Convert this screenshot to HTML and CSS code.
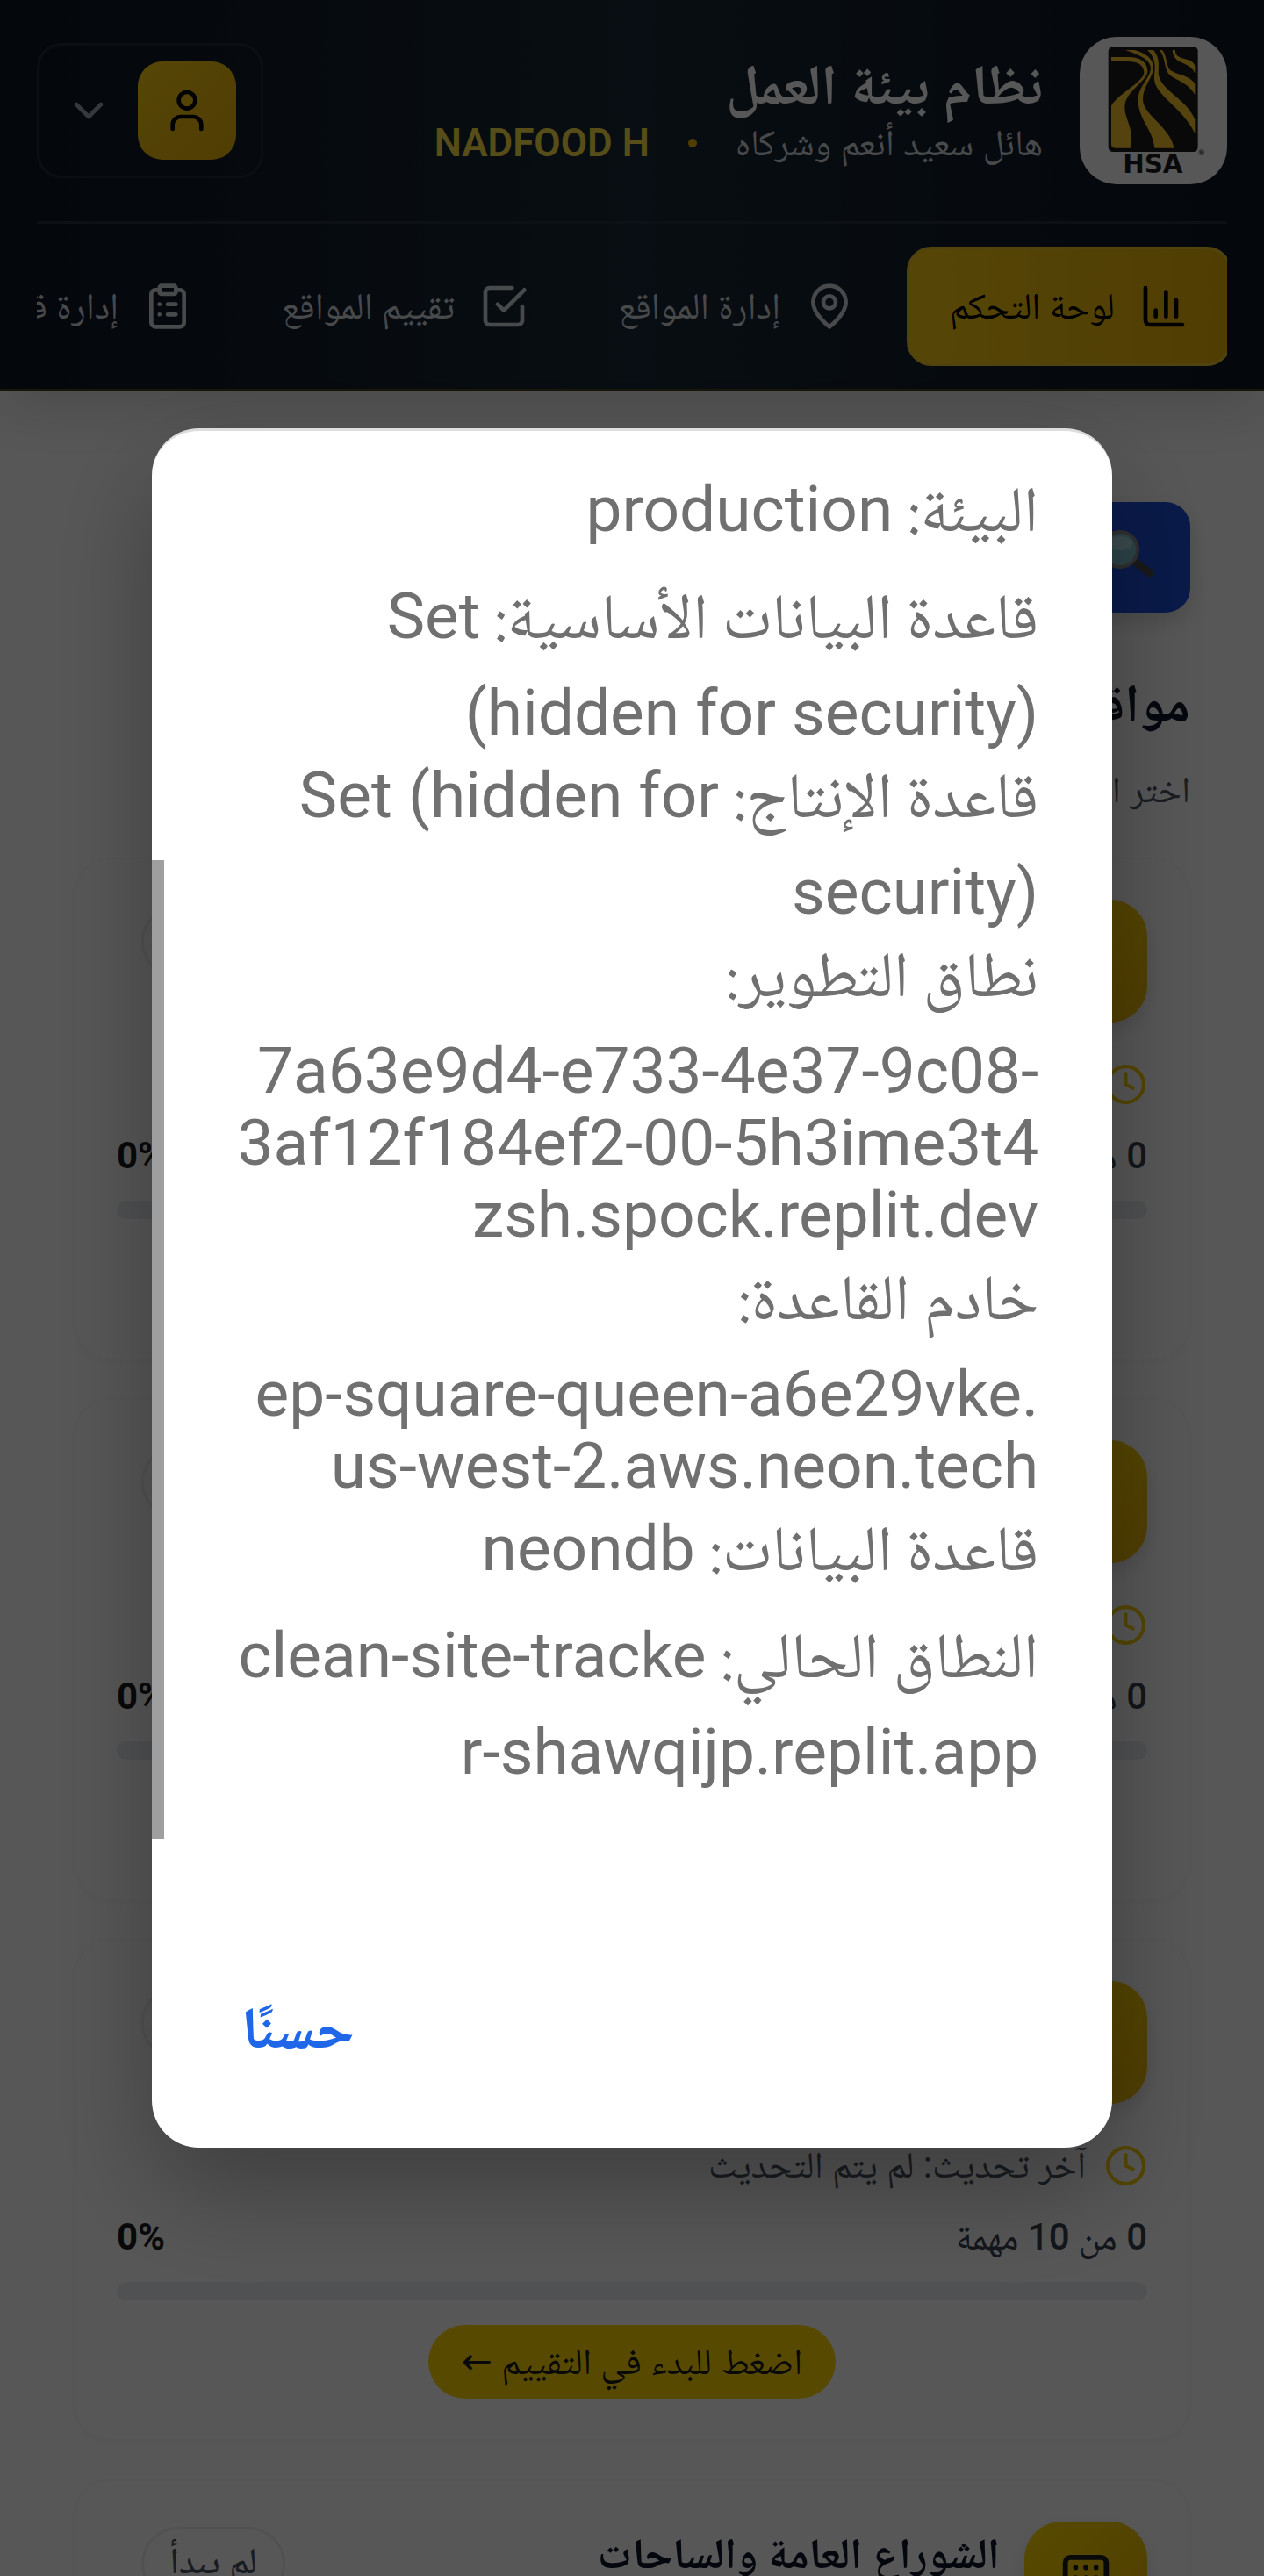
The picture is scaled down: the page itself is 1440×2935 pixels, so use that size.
FILE: index.html
```html
<!DOCTYPE html>
<html lang="ar" dir="rtl">
<head>
<meta charset="utf-8">
<meta name="viewport" content="width=device-width, initial-scale=1">
<title>نظام بيئة العمل</title>
<link rel="stylesheet" href="styles.css">
</head>
<body>
<div class="app">
  <header class="header">
    <div class="topbar">
      <div class="brand">
        <svg class="logo" viewBox="30 36 504 504" role="img" aria-label="HSA">
          <rect x="128" y="69" width="306" height="360" rx="16" fill="#1c1c1c"/>
          <g fill="#f6c52e">
            <path d="M138 105H196C236 105 262 122 262 154C262 188 184 222 184 276C184 320 216 345 205 416H152Q138 416 138 402V272C158 232 252 190 250 156C248 130 226 120 196 120H138Z"/>
            <path d="M186 81H218C256 92 282 110 282 142C280 178 246 204 246 252C248 304 342 346 352 416H286C280 350 230 320 230 252C230 204 272 178 273 142C270 112 234 98 186 81Z"/>
            <path d="M262 81H282C304 108 300 132 299 160C304 220 392 244 424 318V366C386 282 286 234 285 180C286 144 296 116 262 81Z"/>
            <path d="M303 81H312C328 100 324 124 336 146C356 166 404 164 424 196V234C396 184 346 184 330 156C318 132 322 104 303 81Z"/>
            <path d="M347 81H356C358 122 410 100 424 134V160C404 116 350 134 347 81Z"/>
          </g>
          <text x="280" y="500" text-anchor="middle" class="logo-name">HSA</text>
          <circle cx="446" cy="431" r="9" fill="none" stroke="#555" stroke-width="2"/>
          <text x="446" y="436" text-anchor="middle" class="logo-mark">R</text>
        </svg>
        <div class="brand-text">
          <h1 class="brand-title">نظام بيئة العمل</h1>
          <p class="brand-sub"><span>هائل سعيد أنعم وشركاه</span><i class="dot"></i><b class="brand-co">NADFOOD H</b></p>
        </div>
      </div>
      <button class="user" type="button" aria-label="الحساب">
        <span class="avatar">
          <svg class="icon" viewBox="0 0 24 24"><path d="M19 21v-2a4 4 0 0 0-4-4H9a4 4 0 0 0-4 4v2"/><circle cx="12" cy="7" r="4"/></svg>
        </span>
        <svg class="icon chevron" viewBox="0 0 24 24"><path d="m6 9 6 6 6-6"/></svg>
      </button>
    </div>
    <nav class="nav">
      <a class="nav-item active" href="#">
        <svg class="icon" viewBox="0 0 24 24"><path d="M3 3v16a2 2 0 0 0 2 2h16M18 17V9M13 17V5M8 17v-3"/></svg>
        <span>لوحة التحكم</span>
      </a>
      <a class="nav-item" href="#">
        <svg class="icon" viewBox="0 0 24 24"><path d="M20 10c0 6-8 12-8 12s-8-6-8-12a8 8 0 0 1 16 0Z"/><circle cx="12" cy="10" r="3"/></svg>
        <span>إدارة المواقع</span>
      </a>
      <a class="nav-item" href="#">
        <svg class="icon" viewBox="0 0 24 24"><path d="m9 11 3 3L22 4"/><path d="M21 12v7a2 2 0 0 1-2 2H5a2 2 0 0 1-2-2V5a2 2 0 0 1 2-2h11"/></svg>
        <span>تقييم المواقع</span>
      </a>
      <a class="nav-item" href="#">
        <svg class="icon" viewBox="0 0 24 24"><rect x="8" y="2" width="8" height="4" rx="1"/><path d="M16 4h2a2 2 0 0 1 2 2v14a2 2 0 0 1-2 2H6a2 2 0 0 1-2-2V6a2 2 0 0 1 2-2h2M12 11h4M12 16h4M8 11h.01M8 16h.01"/></svg>
        <span>إدارة قوائم</span>
      </a>
    </nav>
  </header>

  <main class="main">
    <button class="check" type="button" aria-label="فحص">
      <svg class="lens" viewBox="0 0 64 64">
        <path d="M44 38 60 50" stroke="#4a4a4a" stroke-width="9" stroke-linecap="round"/>
        <circle cx="26" cy="23" r="20" fill="#7fc4d0" stroke="#8d8d8d" stroke-width="4"/>
        <ellipse cx="26" cy="16" rx="14" ry="8" fill="#a9d8df"/>
      </svg>
    </button>
    <h2 class="heading">مواقع العمل</h2>
    <p class="lead">اختر الموقع</p>

    <section class="cards">
      <article class="card">
        <div class="card-head"><span class="tile"></span><span class="badge"></span></div>
        <p class="updated"><svg class="icon clock" viewBox="0 0 24 24"><circle cx="12" cy="12" r="10"/><path d="M12 6v6l4 2"/></svg></p>
        <div class="stats"><span class="tasks"><b>0</b> من <b>10</b> مهمة</span><b class="percent" dir="ltr">0%</b></div>
        <div class="bar"></div>
      </article>
      <article class="card">
        <div class="card-head"><span class="tile"></span><span class="badge"></span></div>
        <p class="updated"><svg class="icon clock" viewBox="0 0 24 24"><circle cx="12" cy="12" r="10"/><path d="M12 6v6l4 2"/></svg></p>
        <div class="stats"><span class="tasks"><b>0</b> من <b>10</b> مهمة</span><b class="percent" dir="ltr">0%</b></div>
        <div class="bar"></div>
      </article>
      <article class="card">
        <div class="card-head"><span class="tile"></span><span class="badge"></span></div>
        <p class="updated"><svg class="icon clock" viewBox="0 0 24 24"><circle cx="12" cy="12" r="10"/><path d="M12 6v6l4 2"/></svg><span>آخر تحديث: لم يتم التحديث</span></p>
        <div class="stats"><span class="tasks"><b>0</b> من <b>10</b> مهمة</span><b class="percent" dir="ltr">0%</b></div>
        <div class="bar"></div>
        <button class="start" type="button">اضغط للبدء في التقييم ←</button>
      </article>
      <article class="card">
        <div class="card-head">
          <span class="tile"><svg class="icon building" viewBox="0 0 24 24"><rect x="4" y="2" width="16" height="20" rx="2"/><path d="M9 22v-4h6v4M8 6h.01M16 6h.01M12 6h.01M12 10h.01M12 14h.01M16 10h.01M16 14h.01M8 10h.01M8 14h.01"/></svg></span>
          <h3 class="card-title">الشوراع العامة والساحات</h3>
          <span class="badge">لم يبدأ</span>
        </div>
      </article>
    </section>
  </main>
</div>

<div class="overlay">
  <div class="dialog" role="dialog" aria-modal="true">
    <div class="message">
      <p class="label-line"><span>البيئة: </span>production</p>
      <p class="label-line"><span>قاعدة البيانات الأساسية: </span>Set</p>
      <p dir="ltr">(hidden for security)</p>
      <p class="label-line"><span>قاعدة الإنتاج: </span><bdi>Set (hidden for</bdi></p>
      <p dir="ltr">security)</p>
      <p class="label-line"><span>نطاق التطوير:</span></p>
      <p dir="ltr">7a63e9d4-e733-4e37-9c08-</p>
      <p dir="ltr">3af12f184ef2-00-5h3ime3t4</p>
      <p dir="ltr">zsh.spock.replit.dev</p>
      <p class="label-line"><span>خادم القاعدة:</span></p>
      <p dir="ltr">ep-square-queen-a6e29vke.</p>
      <p dir="ltr">us-west-2.aws.neon.tech</p>
      <p class="label-line"><span>قاعدة البيانات: </span>neondb</p>
      <p class="label-line"><span>النطاق الحالي: </span>clean-site-tracke</p>
      <p dir="ltr">r-shawqijp.replit.app</p>
    </div>
    <div class="actions"><button class="ok" type="button">حسنًا</button></div>
    <i class="thumb"></i>
  </div>
</div>
</body>
</html>
```
FILE: styles.css
```css
* { box-sizing: border-box; margin: 0; padding: 0; }
html, body { height: 100%; }
body {
  background: #fff;
  color: #0f172a;
  font-family: Roboto, "Noto Naskh Arabic", "Noto Sans Arabic", "DejaVu Sans", sans-serif;
  font-size: 42px;
  line-height: 56px;
  overflow: hidden;
}
button { border: 0; background: none; font: inherit; color: inherit; }
a { color: inherit; text-decoration: none; }
.app { height: 100vh; overflow: hidden; }
.icon {
  width: 56px; height: 56px; flex: none;
  fill: none; stroke: currentColor; stroke-width: 2;
  stroke-linecap: round; stroke-linejoin: round;
}

.header {
  padding: 42px 42px 0;
  background: linear-gradient(to right, #0d1522, #1a2938, #0d1522);
  border-bottom: 3px solid #48421f;
  box-shadow: 0 20px 60px rgba(0, 0, 0, .15);
}
.topbar {
  display: flex; justify-content: space-between; align-items: center;
  padding-bottom: 42px;
  border-bottom: 3px solid #26323e;
}
.brand { display: flex; align-items: center; gap: 42px; }
.logo { width: 168px; height: 168px; border-radius: 42px; background: #fff; flex: none; }
.logo-name { font: bold 88px "DejaVu Sans", sans-serif; fill: #1c1c1c; }
.logo-mark { font: bold 14px "DejaVu Sans", sans-serif; fill: #555; }
.brand-title { font-size: 64px; line-height: 74px; color: #fff; }
.brand-sub { display: flex; align-items: center; gap: 44px; color: #d1d5db; white-space: nowrap; }
.dot { width: 10px; height: 10px; border-radius: 50%; background: #eab308; }
.brand-co { color: #fde047; font-size: 44px; font-weight: 600; }
.user {
  display: flex; align-items: center; gap: 28px;
  padding: 18px 28px;
  border: 3px solid #222d38; border-radius: 28px;
}
.avatar {
  display: grid; place-items: center;
  width: 112px; height: 112px; border-radius: 28px;
  background: linear-gradient(135deg, #facc15, #eab308); color: #000;
}
.chevron { color: #9ca3af; }
.nav { display: flex; gap: 18px; padding: 26px 0; overflow: hidden; color: #d1d5db; }
.nav-item {
  display: flex; align-items: center; gap: 28px; flex: none;
  height: 136px; padding: 0 42px; border-radius: 28px; white-space: nowrap;
}
.active {
  margin-right: -5px; padding: 0 46px;
  background: linear-gradient(to right, #facc15, #eab308);
  border: 3px solid #ecc32c; color: #000;
}

.main { padding: 126px 84px 0; }
.check {
  display: flex; align-items: center;
  width: 480px; height: 126px; padding: 0 42px; border-radius: 28px;
  background: #1d4ed8; box-shadow: 0 10px 24px rgba(0, 0, 0, .15);
}
.lens { width: 64px; height: 64px; fill: none; }
.heading { margin-top: 62px; font-size: 60px; line-height: 84px; }
.lead { margin-top: 28px; color: #4b5563; }
.cards { display: grid; gap: 42px; margin-top: 48px; }
.card {
  min-height: 574px; padding: 46px;
  border: 3px solid #fafafb; border-radius: 42px; background: #fff;
  box-shadow: 0 3px 6px rgba(0, 0, 0, .03);
}
.card-head { display: flex; align-items: flex-start; gap: 28px; height: 140px; }
.tile {
  display: grid; place-items: center; flex: none;
  width: 140px; height: 140px; border-radius: 42px;
  background: linear-gradient(135deg, #ffd900, #eab308); color: #1c1c1c;
  box-shadow: 0 10px 20px rgba(0, 0, 0, .12);
}
.building { width: 70px; height: 70px; }
.card-title { font-size: 49px; line-height: 74px; flex: 1; }
.badge {
  display: grid; place-items: center;
  width: 164px; height: 84px; margin: 6px auto 0 28px; padding-bottom: 6px;
  border: 3px solid #eceef1; border-radius: 42px; color: #4b5563; font-weight: 500;
}
.updated { display: flex; align-items: center; gap: 21px; height: 56px; margin-top: 42px; color: #4b5563; }
.clock { width: 49px; height: 49px; color: #f5cb00; }
.stats { display: flex; justify-content: space-between; margin-top: 26px; color: #374151; }
.tasks b { font-weight: 500; }
.percent { color: #1c1c1c; }
.bar { height: 21px; margin-top: 23px; border-radius: 11px; background: #e8ecf1; }
.start {
  display: block; height: 84px; margin: 28px auto 0; padding: 0 38px;
  border-radius: 42px; background: #ffd900; color: #1c1c1c; white-space: nowrap;
}

.overlay {
  position: fixed; inset: 0;
  display: grid; place-items: center;
  background: rgba(0, 0, 0, .66);
}
.dialog {
  position: relative;
  width: 76%; padding: 36px 84px 66px;
  border-top: 3px solid #ddd; border-radius: 54px; background: #fff;
  box-shadow: 0 50px 120px rgba(0, 0, 0, .3);
}
.message { color: #707070; font-size: 73px; line-height: 82px; white-space: nowrap; }
.message p { text-align: right; }
.message .label-line { line-height: 106px; padding-bottom: 16px; }
.label-line span { font-family: "Noto Naskh Arabic", Roboto, sans-serif; line-height: 0; }
.actions { display: flex; justify-content: flex-end; margin-top: 204px; }
.ok { height: 140px; color: #1f67e8; font-size: 67px; font-weight: 700; padding: 0 18px; }
.thumb { position: absolute; left: 0; top: 25%; width: 14px; height: 57%; background: #9e9f9e; }
```
